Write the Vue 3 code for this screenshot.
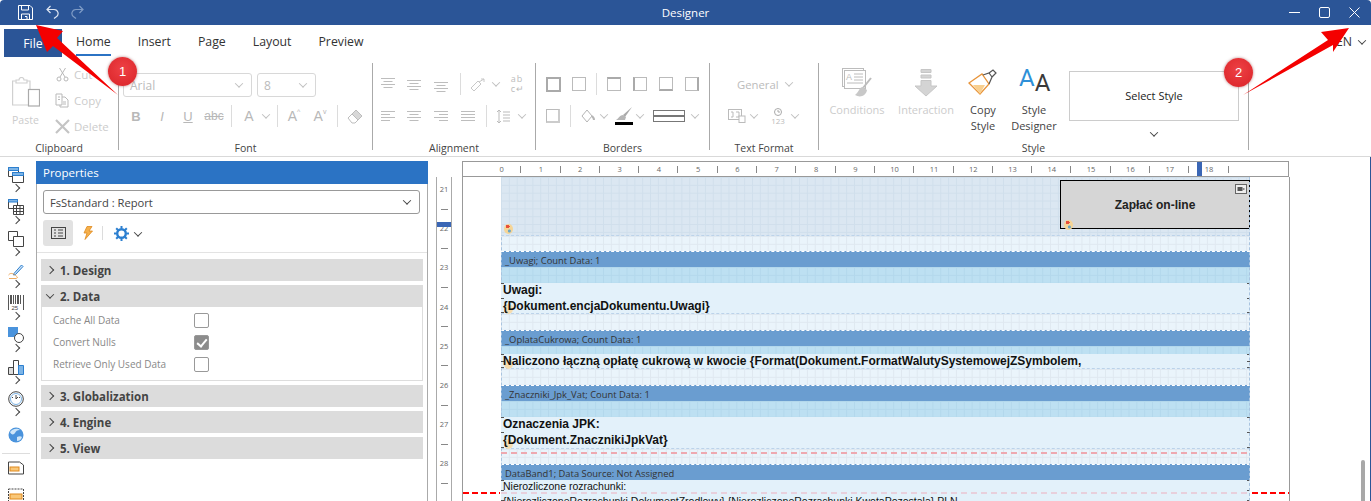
<template>
  <div class="designer">
    <header class="titlebar">
      <div class="quick">
        <svg width="15" height="15" viewBox="0 0 15 15" fill="none" stroke="#fff"><path d="M.5.5h11.5l2.500 2.500v11.500H.5z" /><path d="M3.500.5v4.500h7V.5M3.500 14.500V9h8v5.500M7 11.500h2v3" /></svg>
        <svg width="13" height="14" viewBox="0 0 13 14" fill="none" stroke="#dfe6f2" stroke-width="1.200"><path d="M4.500 1 1 4.500 4.500 8M1 4.500h7a4 4 0 0 1 2 7.500L8 13.500" /></svg>
        <svg width="13" height="14" viewBox="0 0 13 14" fill="none" stroke="#7f9cc6" stroke-width="1.200"><path d="M8.500 1 12 4.500 8.500 8M12 4.500H5a4 4 0 0 0-2 7.500l2 1.500" /></svg>
      </div>
      <span class="title">Designer</span>
      <div class="winctl">
        <svg width="11" height="11" viewBox="0 0 11 11" stroke="#fff" fill="none"><path d="M0 5.500h11" /></svg>
        <svg width="11" height="11" viewBox="0 0 11 11" stroke="#fff" fill="none"><rect x=".5" y=".5" width="10" height="10" rx="1.500" /></svg>
        <svg width="11" height="11" viewBox="0 0 11 11" stroke="#fff" fill="none"><path d="m.5.5 10 10m0-10-10 10" /></svg>
      </div>
    </header>

    <nav class="tabs">
      <span class="tab-file">File</span>
      <span v-for="tab in tabs" :key="tab" class="tab" :class="{ active: tab === 'Home' }">{{ tab }}</span>
      <span class="lang">EN <i class="chev dark"></i></span>
    </nav>

    <section class="ribbon">
      <!-- Clipboard -->
      <div class="group g-clipboard">
        <div class="clip-body">
          <div class="paste">
            <svg width="28" height="30" viewBox="0 0 28 30" fill="none" stroke="#d0d0d0" stroke-width="1.200">
              <path d="M15 4h3v24H.6V4h3" /><path d="M4 6V3h3a2.500 2.500 0 0 1 5 0h3v3z" />
              <rect x="16.500" y="12.500" width="11" height="16.500" fill="#fff" stroke="#aaa" />
            </svg>
            <span>Paste</span>
          </div>
          <div class="clip-small">
            <div class="small-row">
              <svg width="15" height="15" viewBox="0 0 15 15" fill="none" stroke="#b9b9b9"><circle cx="4" cy="12" r="2" /><circle cx="11" cy="12" r="2" /><path d="M5 10 10.500 1M10 10 4.500 1" /></svg>
              <span>Cut</span>
            </div>
            <div class="small-row">
              <svg width="15" height="15" viewBox="0 0 15 15" fill="none" stroke="#b9b9b9"><path d="M1 1h6v11H1zM7 4h3l3 3v7H5v-2M3 4h2M3 6.500h2M8 9h3M8 11h3" /></svg>
              <span>Copy</span>
            </div>
            <div class="small-row">
              <svg width="15" height="15" viewBox="0 0 15 15" fill="none" stroke="#c4c4c4" stroke-width="2.200"><path d="m1 1 13 13M14 1 1 14" /></svg>
              <span>Delete</span>
            </div>
          </div>
        </div>
        <div class="group-label">Clipboard</div>
      </div>

      <!-- Font -->
      <div class="group g-font">
        <div class="combo-row">
          <div class="combo c-font"><span>Arial</span><i class="chev"></i></div>
          <div class="combo c-size"><span>8</span><i class="chev"></i></div>
        </div>
        <div class="font-tools">
          <span class="f-b">B</span><span class="f-i">I</span><span class="f-u">U</span><span class="f-s">abc</span>
          <b class="vsep"></b>
          <span class="f-a">A</span><i class="chev"></i>
          <b class="vsep"></b>
          <span class="f-a">A<sup>^</sup></span><span class="f-a">A<sup>v</sup></span>
          <b class="vsep"></b>
          <svg width="16" height="16" viewBox="0 0 16 16" fill="none" stroke="#bdbdbd"><path d="M1 10 9 2l6 6-7 7H5z" /><path d="M5 6l6 6" /><path d="M9 2l6 6-4 4-6-6z" fill="#d8d8d8" /></svg>
        </div>
        <div class="group-label">Font</div>
      </div>

      <!-- Alignment -->
      <div class="group g-align">
        <div class="align-row a-one">
          <svg v-for="(icon, i) in alignTop" :key="i" width="15" height="15" viewBox="0 0 15 15" stroke="#bdbdbd"><path :d="icon" /></svg>
          <b class="vsep"></b>
          <svg width="16" height="15" viewBox="0 0 16 15" fill="none" stroke="#c8c8c8"><path d="M1 11 8 4l3 3-7 7zM9 5l5-3M14 2l-3 0M14 2v3" /></svg>
          <i class="chev"></i>
          <span class="wrap-ab">ab<br />c↵</span>
        </div>
        <div class="align-row a-two">
          <svg v-for="(icon, i) in alignLeft" :key="i" width="15" height="15" viewBox="0 0 15 15" stroke="#bdbdbd"><path :d="icon" /></svg>
          <b class="vsep"></b>
          <svg width="15" height="15" viewBox="0 0 15 15" fill="none" stroke="#bbb"><path d="M3 1v13M1 3l2-2 2 2M1 12l2 2 2-2M7 3h7M7 6h7M7 9h7M7 12h7" /></svg>
          <i class="chev"></i>
        </div>
        <div class="group-label">Alignment</div>
      </div>

      <!-- Borders -->
      <div class="group g-borders">
        <div class="border-row b-one">
          <i class="bbox thick"></i><i class="bbox"></i><b class="vsep"></b>
          <i class="bbox top"></i><i class="bbox left"></i><i class="bbox bottom"></i><i class="bbox right"></i>
        </div>
        <div class="border-row b-two">
          <i class="bbox shadow"></i><b class="vsep"></b>
          <svg width="14" height="14" viewBox="0 0 14 14" fill="none" stroke="#b5b5b5"><path d="m1 7 5-6 5 6-5 6z" /><path d="M11 7c1 1 2 2 2 4" stroke-width="2" /></svg>
          <i class="chev"></i>
          <div class="brush">
            <svg width="18" height="14" viewBox="0 0 18 14"><path d="M17 0 8 8l2 2z" fill="#aaa" /><path d="M8 8c-3 0-4 3-7 5h9l1-3z" fill="#b5b5b5" /></svg>
            <i class="colorbar"></i>
          </div>
          <i class="chev"></i>
          <i class="linestyle"></i>
          <i class="chev"></i>
        </div>
        <div class="group-label">Borders</div>
      </div>

      <!-- Text Format -->
      <div class="group g-format">
        <div class="fmt-row fmt-one"><span>General</span><i class="chev"></i></div>
        <div class="fmt-row fmt-two">
          <svg width="18" height="14" viewBox="0 0 18 14" fill="none" stroke="#bbb"><rect x=".5" y=".5" width="13" height="10" /><path d="M3 3h2v5H3M8 3h3v5H8" /><rect x="11" y="7" width="6" height="6.500" fill="#fff" /></svg>
          <i class="chev"></i>
          <span class="fmt-num">
            <svg width="10" height="8" viewBox="0 0 10 8" fill="none" stroke="#aaa"><circle cx="5" cy="4" r="3.500" /><path d="M5 2v2h2" /></svg>
            <em>123</em>
          </span>
          <i class="chev"></i>
        </div>
        <div class="group-label">Text Format</div>
      </div>

      <!-- Style -->
      <div class="group g-style">
        <div class="style-body">
          <div class="big off">
            <svg width="30" height="30" viewBox="0 0 30 30" fill="none" stroke="#bcbcbc">
              <rect x=".5" y=".5" width="21" height="18" /><rect x="2.500" y="2.500" width="21" height="18" fill="#fff" />
              <path d="M12 6h9M12 9h9M12 12h9M5 15h16" />
              <path d="M29 10 21 20" stroke-width="2" /><path d="M21 19c-4 0-4 5-8 8 5 3 11 1 12-5z" fill="#c8c8c8" stroke="none" />
              <text x="4" y="12" font-size="9" fill="#bcbcbc" stroke="none" font-family="Liberation Sans, sans-serif">A</text>
            </svg>
            <span>Conditions</span>
          </div>
          <div class="big off">
            <svg width="24" height="30" viewBox="0 0 24 30" fill="#d4d4d4" stroke="#c6c6c6"><path d="M7 1.500h10v3H7zM7 7h10v3H7zM7 12.500h10V18h6L12 28 1 18h6z" /></svg>
            <span>Interaction</span>
          </div>
          <div class="big">
            <svg width="30" height="30" viewBox="0 0 30 30" fill="none">
              <path d="M1 15 14 6l7 10-9 10z" fill="#fff" stroke="#e8943a" stroke-width="1.300" />
              <path d="M5 17h12l-5 9z" fill="#f8cf8f" />
              <path d="m15 7 6-2 3 4-3 7M21 5l4-3 3 3-4 4" stroke="#555" stroke-width="1.200" />
            </svg>
            <span>Copy<br />Style</span>
          </div>
          <div class="big">
            <div class="aa-icon"><span class="aa-blue">A</span><span class="aa-dark">A</span></div>
            <span>Style<br />Designer</span>
          </div>
          <div class="style-picker">
            <div class="style-box">Select Style</div>
            <i class="chev dark"></i>
          </div>
        </div>
        <div class="group-label">Style</div>
      </div>
    </section>

    <main class="workspace">
      <aside class="toolbox">
        <div v-for="tool in tools" :key="tool" class="tool">
          <svg width="16" height="16" viewBox="0 0 16 16" fill="none" stroke="#444" v-html="tool"></svg>
          <i class="chev-right"></i>
        </div>
        <svg class="globe" width="16" height="16" viewBox="0 0 16 16"><circle cx="8" cy="8" r="7.500" fill="#4a93dc" /><path d="M2 5c3-4 8-4 10-2-3 0-4 1-5 3S3 8 2 5zM9 10c2-1 4-1 5 0-1 3-3 4-5 4z" fill="#cfe6f8" /></svg>
        <hr />
        <svg class="band-icon" width="16" height="16" viewBox="0 0 16 16" fill="none" stroke="#444"><path d="M.5 1h11l4 3v9h-15z" /><rect x="2" y="6" width="9" height="4" fill="#f9c778" stroke="#e08a1e" /></svg>
        <svg class="band-icon" width="16" height="16" viewBox="0 0 16 16" fill="none" stroke="#444"><path d="M.5 1h15v14H.500z" stroke-dasharray="2 1" /><rect x="2" y="6" width="12" height="5" fill="#f9c778" stroke="#e08a1e" /></svg>
      </aside>

      <section class="props">
        <h2 class="props-head">Properties</h2>
        <div class="props-select"><span>FsStandard : Report</span><i class="chev dark"></i></div>
        <div class="props-tools">
          <span class="tool-on">
            <svg width="15" height="12" viewBox="0 0 15 12" fill="none" stroke="#444"><rect x=".5" y=".5" width="14" height="11" /><path d="M3 3h2M3 6h2M3 9h2M7 3h5M7 6h5M7 9h5" /></svg>
          </span>
          <svg class="bolt" width="10" height="14" viewBox="0 0 10 14" fill="#f5b04c" stroke="#e08a1e" stroke-width=".8"><path d="M4 .5h5L6 5h3.500L2 13.500 4 7H1z" /></svg>
          <b class="vsep"></b>
          <svg class="gear" width="15" height="15" viewBox="0 0 15 15" fill="none" stroke="#2b7fd0"><circle cx="7.500" cy="7.500" r="4.300" stroke-width="2.400" /><path d="M7.500 0v2.500M7.500 12.500V15M0 7.500h2.500M12.500 7.500H15M2.200 2.200 4 4M11 11l1.800 1.800M2.200 12.800 4 11M11 4l1.800-1.800" stroke-width="2" /></svg>
          <i class="chev dark"></i>
        </div>
        <div class="categories">
          <template v-for="cat in categories" :key="cat.name">
            <div class="cat-head"><i :class="cat.open ? 'chev dark' : 'chev-right'"></i>{{ cat.name }}</div>
            <div v-if="cat.open" class="cat-body">
              <div v-for="row in cat.rows" :key="row.name" class="cat-row">
                <span>{{ row.name }}</span>
                <i class="check" :class="{ on: row.on }"></i>
              </div>
            </div>
          </template>
        </div>
      </section>

      <div class="vruler">
        <div v-for="n in vticks" :key="n" class="vcell"><span>{{ n }}</span><i></i></div>
        <b class="vmark"></b>
      </div>

      <section class="editor">
        <div class="hruler">
          <span v-for="n in hticks" :key="n" class="hcell">{{ n }}</span>
          <b class="hmark"></b>
        </div>
        <div class="sheet">
          <div class="page">
            <div class="top-area">
              <div class="pay-btn">
                Zapłać on-line
                <svg class="pay-mini" width="12" height="10" viewBox="0 0 12 10"><rect x=".5" y=".5" width="11" height="9" fill="#eee" stroke="#666" /><rect x="2.500" y="3" width="5" height="4" fill="#555" /><rect x="7.500" y="4" width="2" height="2" fill="#888" /></svg>
                <i class="pal"></i>
              </div>
              <i class="pal"></i>
            </div>
            <div class="spacer h15"></div>

            <template v-for="band in bands" :key="band.label">
              <div class="band-head">{{ band.label }}</div>
              <div v-if="band.tint" class="band-tint" :style="{ height: band.tint + 'px' }"></div>
              <div class="band-body" :class="{ plain: band.plain }" :style="{ height: band.height + 'px' }">
                <p v-for="line in band.lines" :key="line">{{ line }}</p>
                <i v-if="!band.plain" class="pal"></i>
              </div>
              <div v-if="band.after" class="spacer" :style="{ height: band.after + 'px' }"></div>
            </template>

            <b class="pink p1"></b>
            <b class="pink p2"></b>
          </div>
          <b class="margin-red r-left"></b>
          <b class="margin-red r-right"></b>
        </div>
      </section>

      <div class="scrolltrack"><b></b></div>
    </main>

    <!-- annotations pasted on the screenshot -->
    <svg class="arrows" width="1371" height="501" viewBox="0 0 1371 501">
      <polygon points="36,25 63,31 57,38 118,95 53,46 47,52" fill="#f40000" />
      <polygon points="1349,28 1321,32 1328,40 1243,95 1333,45 1333,52" fill="#f40000" />
    </svg>
    <span class="badge b1">1</span>
    <span class="badge b2">2</span>
  </div>
</template>

<script setup>
const tabs = ['Home', 'Insert', 'Page', 'Layout', 'Preview'];

// horizontal text lines for the alignment buttons
const linesAt = (ys, align) =>
  ys
    .map((y, i) => {
      const w = i % 2 ? 9 : 14;
      const x = align === 'left' ? 0 : align === 'right' ? 14 - w : (14 - w) / 2;
      return `M${x} ${y}.5h${w}`;
    })
    .join('');

const alignTop = [linesAt([1, 4, 7, 10], 'center'), linesAt([3, 6, 9, 12], 'center'), linesAt([5, 8, 11, 14], 'center')];
const alignLeft = [
  linesAt([2, 5, 8, 11], 'left'),
  linesAt([2, 5, 8, 11], 'center'),
  linesAt([2, 5, 8, 11], 'right'),
  'M0 2.500h14M0 5.500h14M0 8.500h14M0 11.500h14',
];

const tools = [
  '<path d="M.5.5h10v9H.5z" fill="#fff"/><path d="M.5.5h10v3H.5z" fill="#7db4e6" stroke="#2b7fd0"/><path d="M4.500 5.500h11v10h-11z" fill="#fff"/><path d="M4.500 5.500h11v3h-11z" fill="#7db4e6" stroke="#2b7fd0"/>',
  '<path d="M.5.5h9v9H.5z" fill="#fff"/><path d="M.5.5h9v2.500H.5z" fill="#7db4e6" stroke="#2b7fd0"/><path d="M5.500 6.500h10v9h-10zM5.500 9.500h10M5.500 12.500h10M8.500 6.500v9M12 6.500v9" fill="#fff"/>',
  '<path d="M.5.5h9v9H.5z"/><path d="M5.500 5.500h10v10h-10z" fill="#fff"/>',
  '<path d="M6 10.500 13.500 2 15 3.500 7.500 11.500 5.500 12z" fill="#cfe3f6" stroke="#2b7fd0"/><path d="M.5 12c2.500-3 5-1 7 .5s3 2 .5 3H1" stroke="#e8943a" stroke-width=".8"/>',
  '<path d="M.5 0v15M2.500 0v9M3.500 0v9M5.500 0v9M7.500 0v9M9.500 0v9M10.500 0v9M12.500 0v9M15.500 0v15" stroke-width=".9"/><text x="3.500" y="15" font-size="6" fill="#444" stroke="none" font-family="Liberation Sans, sans-serif">25</text>',
  '<rect x="0" y="0" width="10" height="10" fill="#4a93dc" stroke="none"/><circle cx="11" cy="11" r="4.500" fill="#fff"/>',
  '<path d="M.5 8.500h5v7h-5z" fill="#ddd"/><path d="M5.500 1.500h5v14h-5z" fill="#fff"/><path d="M10.500 6.500h5v9h-5z" fill="#7db4e6" stroke="#2b7fd0"/>',
  '<circle cx="8" cy="8" r="7.300" fill="#fff"/><circle cx="8" cy="8" r="5.500" stroke="#7db4e6"/><path d="M8 4v4l2-2M4 6l1 1M12 6l-1 1"/>',
];

const categories = [
  { name: '1. Design' },
  {
    name: '2. Data',
    open: true,
    rows: [
      { name: 'Cache All Data' },
      { name: 'Convert Nulls', on: true },
      { name: 'Retrieve Only Used Data' },
    ],
  },
  { name: '3. Globalization' },
  { name: '4. Engine' },
  { name: '5. View' },
];

const vticks = [21, 22, 23, 24, 25, 26, 27, 28];
const hticks = Array.from({ length: 19 }, (_, i) => i);

const bands = [
  { label: '_Uwagi; Count Data: 1', tint: 16, height: 31, after: 16, lines: ['Uwagi:', '{Dokument.encjaDokumentu.Uwagi}'] },
  {
    label: '_OplataCukrowa; Count Data: 1',
    tint: 8,
    height: 15,
    after: 16,
    lines: ['Naliczono łączną opłatę cukrową w kwocie {Format(Dokument.FormatWalutySystemowejZSymbolem,'],
  },
  { label: '_Znaczniki_Jpk_Vat; Count Data: 1', tint: 16, height: 32, after: 15, lines: ['Oznaczenia JPK:', '{Dokument.ZnacznikiJpkVat}'] },
  {
    label: 'DataBand1; Data Source: Not Assigned',
    height: 21,
    plain: true,
    lines: ['Nierozliczone rozrachunki:', '{NierozliczoneRozrachunki.DokumentZrodlowy} {NierozliczoneRozrachunki.KwotaPozostala} PLN'],
  },
];
</script>

<style>
html,
body {
  margin: 0;
  background: #fff;
}
</style>

<style scoped>
.designer {
  position: relative;
  width: 1371px;
  height: 501px;
  overflow: hidden;
  background: #fff;
  font-family: "Open Sans", sans-serif;
  font-size: 12px;
  color: #444;
}

/* title bar */
.titlebar {
  height: 25px;
  background: #2b5597;
  color: #fff;
  display: flex;
  align-items: center;
  justify-content: space-between;
  padding: 0 11px 1px 18px;
  box-sizing: border-box;
  border-radius: 4px 4px 0 0;
  position: relative;
}
.quick {
  display: flex;
  gap: 12.500px;
  align-items: center;
}
.title {
  position: absolute;
  left: 0;
  right: 0;
  text-align: center;
  font-size: 11.500px;
}
.winctl {
  display: flex;
  gap: 19px;
  align-items: center;
}

/* tabs */
.tabs {
  height: 32px;
  display: flex;
  align-items: flex-start;
  gap: 27px;
  padding: 4px 0 0 4px;
  box-sizing: border-box;
  font-size: 12.300px;
  color: #333;
}
.tab-file {
  width: 58px;
  height: 28px;
  margin-right: -13px;
  background: #2b5597;
  color: #fff;
  display: flex;
  align-items: center;
  justify-content: center;
}
.tab {
  height: 27px;
  line-height: 25px;
  box-sizing: border-box;
}
.tab.active {
  border-bottom: 2px solid #2b73c4;
}
.lang {
  margin-left: auto;
  margin-right: 6px;
  line-height: 25px;
  display: flex;
  align-items: center;
  gap: 7px;
}

/* chevrons */
.chev {
  display: inline-block;
  width: 5px;
  height: 5px;
  border-right: 1px solid #c0c0c0;
  border-bottom: 1px solid #c0c0c0;
  transform: rotate(45deg) translate(-1px, -1px);
  flex: none;
}
.chev.dark {
  border-color: #444;
}
.chev-right {
  display: inline-block;
  width: 5px;
  height: 5px;
  border-right: 1px solid #444;
  border-top: 1px solid #444;
  transform: rotate(45deg);
  flex: none;
}

/* ribbon */
.ribbon {
  height: 100px;
  box-sizing: border-box;
  padding-top: 6px;
  border-bottom: 1px solid #d9d9d9;
  display: flex;
  align-items: flex-start;
}
.group {
  position: relative;
  height: 87px;
  box-sizing: border-box;
  border-right: 1px solid #aaa;
  flex: none;
  display: flex;
  flex-direction: column;
}
.group-label {
  position: absolute;
  left: 0;
  right: 0;
  top: 78px;
  height: 14px;
  line-height: 14px;
  text-align: center;
  font-size: 10.500px;
  color: #444;
}
.vsep {
  display: block;
  width: 1px;
  height: 22px;
  background: #dcdcdc;
  flex: none;
}

.g-clipboard {
  width: 119px;
}
.clip-body {
  display: flex;
  padding-left: 12px;
}
.paste {
  width: 30px;
  padding-top: 14px;
  color: #ccc;
  font-size: 10.500px;
  display: flex;
  flex-direction: column;
}
.paste span {
  margin-top: 6px;
}
.clip-small {
  margin-left: 13px;
  display: flex;
  flex-direction: column;
  gap: 4px;
}
.small-row {
  height: 22px;
  display: flex;
  align-items: center;
  gap: 4px;
  color: #ccc;
  font-size: 11.500px;
}

.g-font {
  width: 254px;
  padding: 10px 0 0 4px;
}
.combo-row {
  display: flex;
  gap: 5px;
}
.combo {
  height: 24px;
  box-sizing: border-box;
  border: 1px solid #d8d8d8;
  border-radius: 3px;
  color: #bbb;
  display: flex;
  align-items: center;
  justify-content: space-between;
  padding: 0 9px 0 6px;
}
.c-font {
  width: 129px;
}
.c-size {
  width: 59px;
}
.font-tools {
  margin-top: 7px;
  height: 24px;
  display: grid;
  grid-template-columns: repeat(4, 26px) 9px 26px 8px 15px 18px 34px 1px 34px;
  place-items: center;
  color: #b8b8b8;
  font-family: "Liberation Sans", sans-serif;
  font-size: 13px;
}
.f-b {
  font-weight: 700;
}
.f-i {
  font-style: italic;
}
.f-u {
  text-decoration: underline;
}
.f-s {
  text-decoration: line-through;
  font-size: 12px;
}
.f-a {
  font-size: 14px;
  display: flex;
}
.f-a sup {
  font-size: 7px;
  line-height: 7px;
}

.g-align {
  width: 163px;
  padding: 10px 0 0 2px;
}
.align-row {
  height: 22px;
  display: grid;
  place-items: center;
}
.a-one {
  grid-template-columns: 26px 27px 27px 10px 26px 10px 34px;
}
.a-two {
  margin-top: 10px;
  grid-template-columns: 26px 27px 27px 27px 8px 26px 12px;
}
.wrap-ab {
  font-size: 9px;
  line-height: 10px;
  color: #bbb;
  letter-spacing: 1px;
}

.g-borders {
  width: 174px;
  padding-top: 10px;
}
.border-row {
  height: 22px;
  display: grid;
  place-items: center;
}
.b-one {
  grid-template-columns: 34px 18px 16px 20px 32px 20px 32px;
}
.b-two {
  margin-top: 10px;
  grid-template-columns: 34px 10px 16px 16px 24px 8px 45px 12px;
}
.b-two .vsep {
  justify-self: start;
}
.bbox {
  width: 12px;
  height: 12px;
  border: 1px solid #bbb;
  display: block;
}
.bbox.thick {
  border: 2px solid #aaa;
  width: 11px;
  height: 11px;
}
.bbox.top {
  border-top: 2px solid #aaa;
  height: 11px;
}
.bbox.left {
  border-left: 2px solid #aaa;
  width: 11px;
}
.bbox.bottom {
  border-bottom: 2px solid #aaa;
  height: 11px;
}
.bbox.right {
  border-right: 2px solid #aaa;
  width: 11px;
}
.bbox.shadow {
  border-bottom: 2px solid #ccc;
  border-right: 2px solid #ccc;
  width: 11px;
  height: 11px;
}
.brush {
  display: flex;
  flex-direction: column;
  align-items: center;
  gap: 1px;
}
.colorbar {
  display: block;
  width: 18px;
  height: 3px;
  background: #000;
}
.linestyle {
  display: block;
  justify-self: start;
  margin-left: 9px;
  width: 32px;
  height: 12px;
  box-sizing: border-box;
  border: 1px solid #777;
  background: linear-gradient(#777 0 0) center/100% 2px no-repeat;
}

.g-format {
  width: 109px;
}
.fmt-row {
  display: flex;
  align-items: center;
  padding-left: 18px;
  color: #bbb;
}
.fmt-one {
  height: 22px;
  margin-top: 10px;
  padding-left: 27px;
  gap: 7px;
  font-size: 11.300px;
}
.fmt-two {
  height: 22px;
  margin-top: 10px;
  gap: 5px;
}
.fmt-num {
  margin-left: 7px;
  display: flex;
  flex-direction: column;
  align-items: center;
  width: 18px;
}
.fmt-num em {
  font-style: normal;
  font-size: 8px;
  line-height: 9px;
}

.g-style {
  width: 430px;
}
.style-body {
  display: grid;
  grid-template-columns: 56px 82px 32px 70px 170px;
  padding-left: 10px;
}
.big {
  display: flex;
  flex-direction: column;
  align-items: center;
  padding-top: 5px;
  font-size: 11px;
  line-height: 16px;
  text-align: center;
  color: #444;
  white-space: nowrap;
}
.big svg {
  margin-bottom: 4px;
}
.big.off {
  color: #ccc;
}
.aa-icon {
  width: 30px;
  height: 30px;
  margin-bottom: 4px;
  display: flex;
  font-family: Roboto, sans-serif;
  font-size: 24px;
  line-height: 30px;
}
.aa-blue {
  color: #2e90d8;
  margin-top: -5px;
  height: 30px;
}
.aa-dark {
  color: #3a3a3a;
  height: 30px;
}
.style-picker {
  padding-top: 8px;
  display: flex;
  flex-direction: column;
  align-items: center;
  gap: 10px;
}
.style-box {
  width: 170px;
  height: 50px;
  box-sizing: border-box;
  border: 1px solid #ccc;
  padding-bottom: 2px;
  display: flex;
  align-items: center;
  justify-content: center;
  font-size: 11px;
  color: #222;
}

/* workspace */
.workspace {
  height: 344px;
  display: flex;
  align-items: flex-start;
  border-right: 1px solid #2b5597;
  box-sizing: border-box;
}
.toolbox {
  width: 36px;
  height: 100%;
  flex: none;
  padding: 10px 4px 0 0;
  box-sizing: border-box;
  display: flex;
  flex-direction: column;
  align-items: center;
}
.tool {
  height: 32px;
  flex: none;
  display: flex;
  flex-direction: column;
  align-items: center;
  gap: 2px;
}
.tool svg {
  display: block;
}
.globe {
  margin-top: 4px;
  flex: none;
}
.toolbox hr {
  width: 28px;
  margin: 10px 0 7px;
  border: 0;
  border-top: 1px solid #ddd;
  flex: none;
}
.band-icon {
  flex: none;
  margin-bottom: 11px;
}

.props {
  width: 392px;
  height: 340px;
  margin-top: 4px;
  box-sizing: border-box;
  border-left: 1px solid #aaa;
  border-right: 1px solid #aaa;
  flex: none;
}
.props-head {
  margin: 0 -1px;
  height: 23px;
  line-height: 23px;
  background: #2b73c4;
  color: #fff;
  font-size: 11.500px;
  font-weight: 400;
  padding-left: 7px;
}
.props-select {
  margin: 6px 7px 0 6px;
  height: 24px;
  box-sizing: border-box;
  border: 1px solid #999;
  border-radius: 3px;
  display: flex;
  align-items: center;
  justify-content: space-between;
  padding: 0 9px 0 6px;
  font-size: 11.200px;
  color: #444;
}
.props-tools {
  height: 33px;
  margin-top: 6px;
  padding-left: 6px;
  box-sizing: border-box;
  border-bottom: 1px solid #e3e3e3;
  display: flex;
  align-items: flex-start;
}
.tool-on {
  width: 30px;
  height: 26px;
  border-radius: 3px;
  background: #e2e2e2;
  display: flex;
  align-items: center;
  justify-content: center;
}
.bolt {
  margin: 6px 0 0 10px;
}
.props-tools .vsep {
  height: 14px;
  margin: 6px 0 0 9px;
}
.gear {
  margin: 6px 0 0 11px;
}
.props-tools .chev {
  margin: 11px 0 0 6px;
}
.categories {
  padding: 6px 4px 0 4px;
  display: flex;
  flex-direction: column;
  gap: 4px;
}
.cat-head {
  height: 22px;
  background: #dcdcdc;
  display: flex;
  align-items: center;
  gap: 7px;
  padding-left: 6px;
  font-weight: 700;
  font-size: 11.500px;
  color: #444;
}
.cat-body {
  margin-top: -4px;
  height: 74px;
  box-sizing: border-box;
  border: 1px solid #ddd;
  border-top: 0;
  padding: 6px 0 0 11px;
  display: flex;
  flex-direction: column;
  gap: 7px;
}
.cat-row {
  height: 15px;
  display: flex;
  align-items: center;
  color: #888;
  font-size: 10px;
}
.cat-row span {
  width: 141px;
  margin-top: -2px;
}
.check {
  display: block;
  width: 15px;
  height: 15px;
  box-sizing: border-box;
  border: 1px solid #999;
  border-radius: 2px;
}
.check.on {
  background: #8c8c8c;
  position: relative;
}
.check.on::after {
  content: "";
  position: absolute;
  left: 4px;
  top: 1px;
  width: 4px;
  height: 8px;
  border-right: 2px solid #fff;
  border-bottom: 2px solid #fff;
  transform: rotate(40deg);
}

/* rulers */
.vruler {
  position: relative;
  width: 16px;
  height: 324px;
  margin: 20px 0 0 8px;
  padding-top: 3px;
  box-sizing: border-box;
  border-left: 1px solid #aaa;
  border-right: 1px solid #aaa;
  flex: none;
  overflow: hidden;
}
.vcell {
  height: 39.200px;
  display: flex;
  flex-direction: column;
  align-items: center;
}
.vcell span {
  height: 19.600px;
  line-height: 19.600px;
  font-size: 7.500px;
  color: #666;
}
.vcell i {
  display: block;
  margin-top: 9px;
  width: 7px;
  height: 1px;
  background: #888;
}
.vmark {
  position: absolute;
  left: 0;
  right: 0;
  top: 45px;
  height: 5px;
  background: #3a66b5;
}
.editor {
  width: 828px;
  margin: 4px 0 0 10px;
  flex: none;
}
.hruler {
  position: relative;
  height: 16px;
  width: 827px;
  box-sizing: border-box;
  border: 1px solid #999;
  padding-left: 19px;
  display: flex;
}
.hcell {
  width: 39.300px;
  flex: none;
  box-sizing: border-box;
  text-align: center;
  font-size: 7.500px;
  line-height: 14px;
  color: #666;
  background: linear-gradient(#888 0 0) right center/1px 7px no-repeat;
}
.hmark {
  position: absolute;
  left: 734px;
  top: 0;
  bottom: 0;
  width: 5px;
  background: #3a66b5;
}
.sheet {
  position: relative;
  height: 324px;
  box-sizing: border-box;
  border-left: 1px solid #999;
  border-right: 1px solid #999;
  padding: 0 39px 0 38px;
}

/* report page */
.page {
  position: relative;
  width: 749px;
  height: 324px;
  overflow: hidden;
  font-family: "Liberation Sans", sans-serif;
}
.page::before,
.page::after {
  content: "";
  position: absolute;
  top: 0;
  bottom: 0;
  border-left: 1px dashed #a9c4e0;
}
.page::before {
  left: 0;
}
.page::after {
  right: 0;
}
.top-area {
  position: relative;
  height: 59px;
  box-sizing: border-box;
  padding-top: 3px;
  display: flex;
  justify-content: flex-end;
  border-bottom: 1px dashed #bcd3ea;
  background-color: #dbe7f2;
  background-image: linear-gradient(#d0dfec 1px, transparent 1px), linear-gradient(90deg, #d0dfec 1px, transparent 1px);
  background-size: 7.850px 7.850px;
}
.pay-btn {
  position: relative;
  width: 190px;
  height: 49px;
  box-sizing: border-box;
  border: 1px solid #000;
  background: #d6d6d6;
  display: flex;
  align-items: center;
  justify-content: center;
  font-weight: 700;
  font-size: 12px;
  color: #222;
}
.pay-mini {
  position: absolute;
  top: 3px;
  right: 2px;
}
.pal {
  position: absolute;
  left: 3px;
  bottom: -2px;
  width: 9px;
  height: 10px;
  border-radius: 50%;
  background: radial-gradient(circle at 40% 25%, #e8503a 0 2px, transparent 2px), radial-gradient(circle at 60% 70%, #6aa6c4 0 1px, transparent 2px), #f6d596;
}
.top-area > .pal {
  bottom: 1px;
}
.band-body .pal {
  background: #f6dcae;
  bottom: -1px;
}
.spacer {
  background-color: #eaf4fb;
  background-image: linear-gradient(#dfe8f0 1px, transparent 1px), linear-gradient(90deg, #dfe8f0 1px, transparent 1px);
  background-size: 7.850px 7.850px;
}
.h15 {
  height: 15px;
}
.band-head {
  height: 15px;
  border-top: 1px dashed #fff;
  background: #6a9dd0;
  font-family: "Open Sans", sans-serif;
  font-size: 9.400px;
  line-height: 18px;
  padding-left: 4px;
  color: #333;
}
.band-tint {
  background-color: #bde0f2;
  background-image: linear-gradient(#b3d8ec 1px, transparent 1px), linear-gradient(90deg, #b3d8ec 1px, transparent 1px);
  background-size: 7.850px 7.850px;
}
.band-body {
  position: relative;
  box-sizing: border-box;
  border-bottom: 1px dashed #bcd3ea;
  padding-left: 2px;
  background:
    linear-gradient(#555 0 0) 0 0/3px 1px no-repeat,
    linear-gradient(#555 0 0) 0 50%/3px 1px no-repeat,
    linear-gradient(#555 0 0) 0 100%/3px 1px no-repeat,
    linear-gradient(#555 0 0) 100% 0/3px 1px no-repeat,
    linear-gradient(#555 0 0) 100% 50%/3px 1px no-repeat,
    linear-gradient(#555 0 0) 100% 100%/3px 1px no-repeat,
    #e3f1fa;
  font-weight: 700;
  font-size: 12px;
  line-height: 16px;
  color: #111;
}
.band-body p {
  margin: 0;
  position: relative;
  z-index: 1;
  top: -1px;
  white-space: nowrap;
}
.band-body.plain {
  font-weight: 400;
  font-size: 10.500px;
  line-height: 15px;
  height: auto;
  overflow: visible;
  border-bottom: 0;
}
.pink {
  position: absolute;
  left: 0;
  right: 0;
  height: 1px;
  background: repeating-linear-gradient(90deg, #eea9b0 0 6px, transparent 6px 10px);
}
.p1 {
  top: 275px;
  height: 2px;
}
.p2 {
  top: 315px;
  height: 2px;
  background: repeating-linear-gradient(90deg, #e8d0dc 0 6px, transparent 6px 10px);
}
.margin-red {
  position: absolute;
  top: 315px;
  height: 2px;
  width: 37px;
  background: repeating-linear-gradient(90deg, #f00 0 6px, transparent 6px 9px);
}
.r-left {
  left: 0;
}
.r-right {
  right: 0;
}

.scrolltrack {
  flex: 1;
  align-self: stretch;
  display: flex;
  align-items: flex-end;
  justify-content: flex-end;
  padding-right: 5px;
}
.scrolltrack b {
  display: block;
  width: 4px;
  height: 41px;
  border-radius: 2px 2px 0 0;
  background: #a8a8a8;
}

/* annotations */
.arrows {
  position: absolute;
  left: 0;
  top: 0;
  pointer-events: none;
}
.badge {
  position: absolute;
  width: 29px;
  height: 29px;
  border-radius: 50%;
  background: radial-gradient(circle at 50% 40%, #ee4145, #d92227);
  box-shadow: 0 0 3px rgba(120, 0, 0, 0.5);
  color: #fff;
  font-family: "Liberation Sans", sans-serif;
  font-size: 13px;
  line-height: 29px;
  text-align: center;
}
.b1 {
  left: 108px;
  top: 57px;
}
.b2 {
  left: 1224px;
  top: 58px;
}
</style>
